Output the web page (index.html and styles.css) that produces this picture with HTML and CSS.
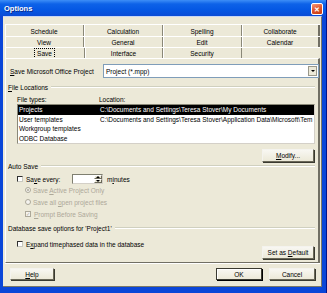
FILE: index.html
```html
<!DOCTYPE html>
<html lang="en">
<head>
  <meta charset="UTF-8" />
  <title>Options</title>
  <link rel="stylesheet" href="styles.css">
</head>
<body>
  <div class="window">
    <div class="titlebar">
      <span class="title">Options</span>
      <span class="close-btn">&#x2715;</span>
    </div>
    <div class="client">
      <div class="tabs">
        <div class="tab-row">
          <span class="tab">Schedule</span>
          <span class="tab">Calculation</span>
          <span class="tab">Spelling</span>
          <span class="tab">Collaborate</span>
        </div>
        <div class="tab-row">
          <span class="tab">View</span>
          <span class="tab">General</span>
          <span class="tab">Edit</span>
          <span class="tab">Calendar</span>
        </div>
        <div class="tab-row front">
          <span class="tab"><span class="focus">Save</span></span>
          <span class="tab">Interface</span>
          <span class="tab">Security</span>
          <span class="tab empty"></span>
        </div>
      </div>

      <div class="panel">
        <div class="save-row">
          <label class="save-label"><u>S</u>ave Microsoft Office Project</label>
          <div class="combo">
            <span class="combo-text">Project (*.mpp)</span>
            <span class="combo-btn"><span class="arrow-down"></span></span>
          </div>
        </div>

        <div class="legend"><span><u>F</u>ile Locations</span><span class="rule"></span></div>
        <div class="list-head">
          <span class="col-type">File types:</span>
          <span>Location:</span>
        </div>
        <div class="listbox">
          <div class="list-item selected"><span class="col-type">Projects</span><span>C:\Documents and Settings\Teresa Stover\My Documents</span></div>
          <div class="list-item"><span class="col-type">User templates</span><span>C:\Documents and Settings\Teresa Stover\Application Data\Microsoft\Tem</span></div>
          <div class="list-item"><span class="col-type">Workgroup templates</span></div>
          <div class="list-item"><span class="col-type">ODBC Database</span></div>
        </div>
        <div class="btn-line">
          <button class="btn modify-btn"><u>M</u>odify...</button>
        </div>

        <div class="legend autosave"><span>Auto Save</span><span class="rule"></span></div>
        <div class="every-row">
          <span class="check"></span>
          <span class="every-label">Sa<u>v</u>e every:</span>
          <span class="spinner">
            <span class="spin-field"></span>
            <span class="spin-btns">
              <span class="spin-up"><span class="arrow-up"></span></span>
              <span class="spin-down"><span class="arrow-down"></span></span>
            </span>
          </span>
          <span class="minutes">m<u>i</u>nutes</span>
        </div>
        <div class="opt-row disabled">
          <span class="radio checked"></span>
          <span>Save <u>A</u>ctive Project Only</span>
        </div>
        <div class="opt-row disabled">
          <span class="radio"></span>
          <span>Save all <u>o</u>pen project files</span>
        </div>
        <div class="opt-row disabled">
          <span class="check checked">&#x2713;</span>
          <span><u>P</u>rompt Before Saving</span>
        </div>

        <div class="legend database"><span>Database save options for 'Project1'</span><span class="rule"></span></div>
        <div class="db-row">
          <div class="expand-row">
            <span class="check"></span>
            <span>E<u>x</u>pand timephased data in the database</span>
          </div>
          <button class="btn default-btn">Set as <u>D</u>efault</button>
        </div>
      </div>

      <div class="footer">
        <button class="btn help-btn"><u>H</u>elp</button>
        <div class="footer-right">
          <button class="btn ok-btn">OK</button>
          <button class="btn">Cancel</button>
        </div>
      </div>
    </div>
  </div>
</body>
</html>
```

FILE: styles.css
```css
* { box-sizing: border-box; }
html, body {
  margin: 0;
  padding: 0;
  width: 327px;
  height: 293px;
  overflow: hidden;
}
body {
  font-family: "Liberation Sans", Arial, sans-serif;
  font-size: 6.5px;
  color: #000;
}
u { text-decoration: underline; text-underline-offset: 1px; }

.window {
  width: 327px;
  height: 293px;
  display: flex;
  flex-direction: column;
  background: #0a46d8;
  border-right: 1px solid #00138c;
}
.titlebar {
  height: 16px;
  flex: none;
  display: flex;
  align-items: center;
  justify-content: space-between;
  padding: 0 3px 0 4px;
  background: linear-gradient(180deg, #3d8ef7 0%, #0d62e8 25%, #0558e4 60%, #0a4cd6 100%);
}
.title {
  color: #fff;
  font-weight: 700;
  font-size: 7.5px;
  text-shadow: 1px 1px #0a2c8a;
  margin-top: 1px;
}
.close-btn {
  width: 12px;
  height: 12px;
  margin-top: 2px;
  border: 1px solid #fff;
  border-radius: 2px;
  background: linear-gradient(160deg, #f59a7a 0%, #e2582f 45%, #c83c12 100%);
  color: #fff;
  font-size: 7px;
  font-weight: 700;
  display: flex;
  align-items: center;
  justify-content: center;
  line-height: 1;
}

.client {
  flex: 1;
  margin: 0 4px 6px 3px;
  padding: 7px 2px 0 2px;
  background: #ece9d8;
  border-top: 1px solid #c8d6f4;
  border-bottom: 1px solid #7a7868;
  border-right: 1px solid #7a7868;
  display: flex;
  flex-direction: column;
}

/* tabs */
.tabs {
  width: 315px;
  display: flex;
  flex-direction: column;
}
.tab-row {
  display: flex;
  height: 11px;
  border-top: 1px solid #fff;
}
.tab-row:first-child { height: 12px; }
.tab {
  width: 79px;
  display: flex;
  align-items: center;
  justify-content: center;
  border-right: 1px solid #8a8878;
  box-shadow: inset 1px 0 #fff;
  padding-top: 1px;
}
.tab:last-child { width: 78px; border-right: 2px solid #716f64; }
.front .tab:nth-child(1) { width: 80px; }
.front .tab:nth-child(2) { width: 78px; }
.front .tab.empty {
  border-right: none;
  box-shadow: none;
}
.focus {
  outline: 1px dotted #000;
  outline-offset: 1px;
  padding: 0 1px;
}

/* panel */
.panel {
  width: 315px;
  height: 205px;
  display: flex;
  flex-direction: column;
  padding: 0 0 0 4px;
  border-top: 1px solid #fff;
  border-left: 1px solid #fff;
  border-right: 2px solid #716f64;
  border-bottom: 1px solid #716f64;
  box-shadow: 0 1px #fff;
}
.save-row {
  display: flex;
  align-items: center;
  height: 14px;
  margin-top: 5px;
}
.save-label { width: 93px; }
.combo {
  flex: 1;
  height: 14px;
  margin-right: -1px;
  display: flex;
  align-items: center;
  background: #fff;
  border: 1px solid #7f9db9;
}
.combo-text { flex: 1; padding-left: 2px; }
.combo-btn {
  width: 9px;
  height: 10px;
  margin-right: 1px;
  display: flex;
  align-items: center;
  justify-content: center;
  background: #ece9d8;
  border: 1px solid #9a988a;
}
.arrow-down, .arrow-up {
  width: 0;
  height: 0;
  border-left: 2px solid transparent;
  border-right: 2px solid transparent;
}
.arrow-down { border-top: 2px solid #000; }
.arrow-up { border-bottom: 2px solid #000; }

.legend {
  display: flex;
  align-items: center;
  height: 8px;
  margin: 5px 3px 0 -2px;
  gap: 3px;
}
.rule {
  flex: 1;
  height: 2px;
  border-top: 1px solid #d0d0bf;
  border-bottom: 1px solid #fff;
}
.legend.autosave { margin-top: 0; }
.legend.database { margin-top: 4px; }

.list-head {
  display: flex;
  align-items: center;
  height: 8px;
  margin-top: 4px;
  padding-left: 7px;
}
.list-head .col-type { width: 82px; }
.listbox {
  height: 40px;
  margin: 1px 3px 0 7px;
  padding: 0;
  background: #fff;
  border: 1px solid #8a8878;
  border-right-color: #d4d0c8;
  border-bottom-color: #d4d0c8;
  overflow: hidden;
}
.list-item {
  display: flex;
  align-items: center;
  height: 9.5px;
  padding-left: 1px;
  white-space: nowrap;
}
.list-item .col-type { width: 81px; flex: none; }
.list-item.selected { background: #000; color: #fff; }

.btn-line {
  display: flex;
  justify-content: flex-end;
  margin: 5px 4px 0 0;
}
.btn {
  font: inherit;
  color: #000;
  height: 13px;
  padding: 0;
  border: 1px solid #6a6858;
  border-top-color: #f4f3ee;
  border-left-color: #f4f3ee;
  box-shadow: 1px 1px #3a3a30;
  background: linear-gradient(180deg, #f8f7f2 0%, #ece9d8 100%);
  border-radius: 0;
}
.modify-btn { width: 52px; }

.every-row {
  display: flex;
  align-items: center;
  height: 10px;
  margin-top: 4px;
  padding-left: 7px;
}
.check {
  width: 6px;
  height: 6px;
  flex: none;
  background: #fff;
  border: 1px solid #303030;
  border-right-color: #c8c8c0;
  border-bottom-color: #c8c8c0;
  font-size: 5px;
  line-height: 4px;
  text-align: center;
}
.every-label { margin-left: 3px; width: 46px; }
.spinner {
  display: flex;
  width: 31px;
  height: 10px;
  background: #fff;
  border: 1px solid #7f7f70;
  border-right-color: #d4d0c8;
  border-bottom-color: #d4d0c8;
}
.spin-field { flex: 1; }
.spin-btns {
  width: 8px;
  display: flex;
  flex-direction: column;
}
.spin-up, .spin-down {
  flex: 1;
  display: flex;
  align-items: center;
  justify-content: center;
  background: #ece9d8;
  border: 1px solid #fff;
  border-right-color: #6a6858;
  border-bottom-color: #6a6858;
}
.minutes { margin-left: 4px; }

.opt-row {
  display: flex;
  align-items: center;
  gap: 2px;
  height: 12px;
  padding-left: 15px;
}
.opt-row:first-of-type { margin-top: 1px; }
.disabled { color: #aca899; }
.radio {
  width: 6px;
  height: 6px;
  flex: none;
  border-radius: 50%;
  background: #f4f3ee;
  border: 1px solid #aca899;
  display: flex;
  align-items: center;
  justify-content: center;
}
.radio.checked::after {
  content: "";
  width: 2px;
  height: 2px;
  border-radius: 50%;
  background: #aca899;
}
.disabled .check {
  background: #f4f3ee;
  border-color: #aca899;
  color: #aca899;
}
.opt-row .check { margin-right: 1px; }

.db-row {
  display: flex;
  justify-content: space-between;
  height: 20px;
  margin: 7px 4px 0 0;
}
.expand-row {
  display: flex;
  align-items: center;
  gap: 3px;
  height: 10px;
  padding-left: 7px;
}
.default-btn { width: 52px; align-self: flex-end; }

.footer {
  display: flex;
  justify-content: space-between;
  margin-top: 5px;
  padding: 0 4px 0 5px;
}
.help-btn { width: 44px; height: 12px; }
.footer-right { display: flex; gap: 7px; }
.footer-right .btn { width: 46px; height: 12px; }
.ok-btn { border-color: #3a3a30; box-shadow: 1px 1px #000, inset 1px 1px #fff; }
```
